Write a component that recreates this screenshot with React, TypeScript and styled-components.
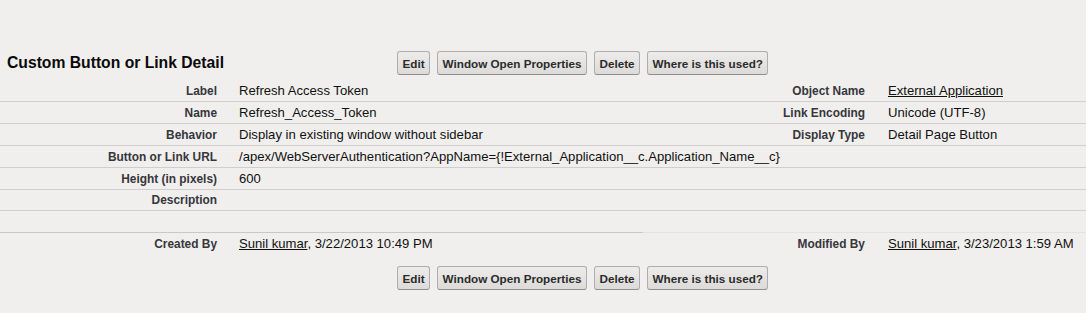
import React from "react";
import styled, { createGlobalStyle } from "styled-components";

const GlobalStyle = createGlobalStyle`
  html, body {
    margin: 0;
    padding: 0;
    background: #f0efed;
  }
  body {
    font-family: "Liberation Sans", Arial, sans-serif;
    color: #111;
  }
`;

const Page = styled.div`
  width: 1086px;
  height: 313px;
  padding-top: 46px;
  box-sizing: border-box;
  overflow: hidden;
  background: #f0efed;
`;

const Header = styled.div`
  display: flex;
  align-items: center;
  height: 34px;
`;

const Title = styled.h2`
  margin: 0;
  width: 390px;
  flex-shrink: 0;
  padding-left: 7px;
  font-size: 15.7px;
  font-weight: bold;
  color: #0a0a0a;
  white-space: nowrap;
`;

const ButtonBar = styled.div`
  display: flex;
  gap: 7px;
  align-items: center;
`;

const FooterBar = styled(ButtonBar)`
  margin-top: 12px;
  padding-left: 397px;
`;

const Button = styled.button`
  height: 24px;
  padding: 0 4.5px;
  font-family: "Liberation Sans", Arial, sans-serif;
  font-size: 11.7px;
  font-weight: bold;
  color: #2b2b2b;
  background: linear-gradient(#edecea, #dcdbd9);
  border: 1px solid #aeaeae;
  border-bottom-color: #8e8e8e;
  border-radius: 3px;
  white-space: nowrap;
  cursor: pointer;
`;

const Row = styled.div<{ $h?: number; $border?: boolean }>`
  display: grid;
  grid-template-columns: 228px 415px 233px 1fr;
  align-items: center;
  height: ${(p) => p.$h ?? 21}px;
  border-bottom: ${(p) => (p.$border === false ? "none" : "1px solid #cfcfcf")};
`;

const LabelCell = styled.div`
  text-align: right;
  padding-right: 11px;
  font-size: 11.9px;
  font-weight: bold;
  color: #36363c;
  white-space: nowrap;
`;

const RightLabelCell = styled(LabelCell)``;

const DataCell = styled.div<{ $span?: number; $pad?: number }>`
  padding-left: ${(p) => p.$pad ?? 11}px;
  font-size: 13.1px;
  color: #111;
  white-space: nowrap;
  grid-column: span ${(p) => p.$span ?? 1};
`;

const SplitHalf = styled.div<{ $tone: "dark" | "light" }>`
  grid-column: span 2;
  height: 100%;
  box-sizing: border-box;
  border-bottom: 1px solid ${(p) => (p.$tone === "dark" ? "#c8c8c8" : "#e3e3e1")};
`;

const Link = styled.a`
  color: #111;
  text-decoration: underline;
`;

const Buttons = ({ Bar }: { Bar: typeof ButtonBar }) => (
  <Bar>
    <Button>Edit</Button>
    <Button>Window Open Properties</Button>
    <Button>Delete</Button>
    <Button>Where is this used?</Button>
  </Bar>
);

export default function App() {
  return (
    <>
      <GlobalStyle />
      <Page>
        <Header>
          <Title>Custom Button or Link Detail</Title>
          <Buttons Bar={ButtonBar} />
        </Header>

        <Row>
          <LabelCell>Label</LabelCell>
          <DataCell>Refresh Access Token</DataCell>
          <RightLabelCell>Object Name</RightLabelCell>
          <DataCell $pad={12}>
            <Link>External Application</Link>
          </DataCell>
        </Row>
        <Row>
          <LabelCell>Name</LabelCell>
          <DataCell>Refresh_Access_Token</DataCell>
          <RightLabelCell>Link Encoding</RightLabelCell>
          <DataCell $pad={12}>Unicode (UTF-8)</DataCell>
        </Row>
        <Row>
          <LabelCell>Behavior</LabelCell>
          <DataCell>Display in existing window without sidebar</DataCell>
          <RightLabelCell>Display Type</RightLabelCell>
          <DataCell $pad={12}>Detail Page Button</DataCell>
        </Row>
        <Row>
          <LabelCell>Button or Link URL</LabelCell>
          <DataCell $span={3}>
            /apex/WebServerAuthentication?AppName={"{"}!External_Application__c.Application_Name__c{"}"}
          </DataCell>
        </Row>
        <Row>
          <LabelCell>Height (in pixels)</LabelCell>
          <DataCell $span={3}>600</DataCell>
        </Row>
        <Row $h={20}>
          <LabelCell>Description</LabelCell>
          <DataCell $span={3}></DataCell>
        </Row>
        <Row $h={22} $border={false}>
          <SplitHalf $tone="dark" />
          <SplitHalf $tone="light" />
        </Row>
        <Row $h={21} $border={false}>
          <LabelCell>Created By</LabelCell>
          <DataCell>
            <Link>Sunil kumar</Link>, 3/22/2013 10:49 PM
          </DataCell>
          <RightLabelCell>Modified By</RightLabelCell>
          <DataCell $pad={12}>
            <Link>Sunil kumar</Link>, 3/23/2013 1:59 AM
          </DataCell>
        </Row>

        <Buttons Bar={FooterBar} />
      </Page>
    </>
  );
}
